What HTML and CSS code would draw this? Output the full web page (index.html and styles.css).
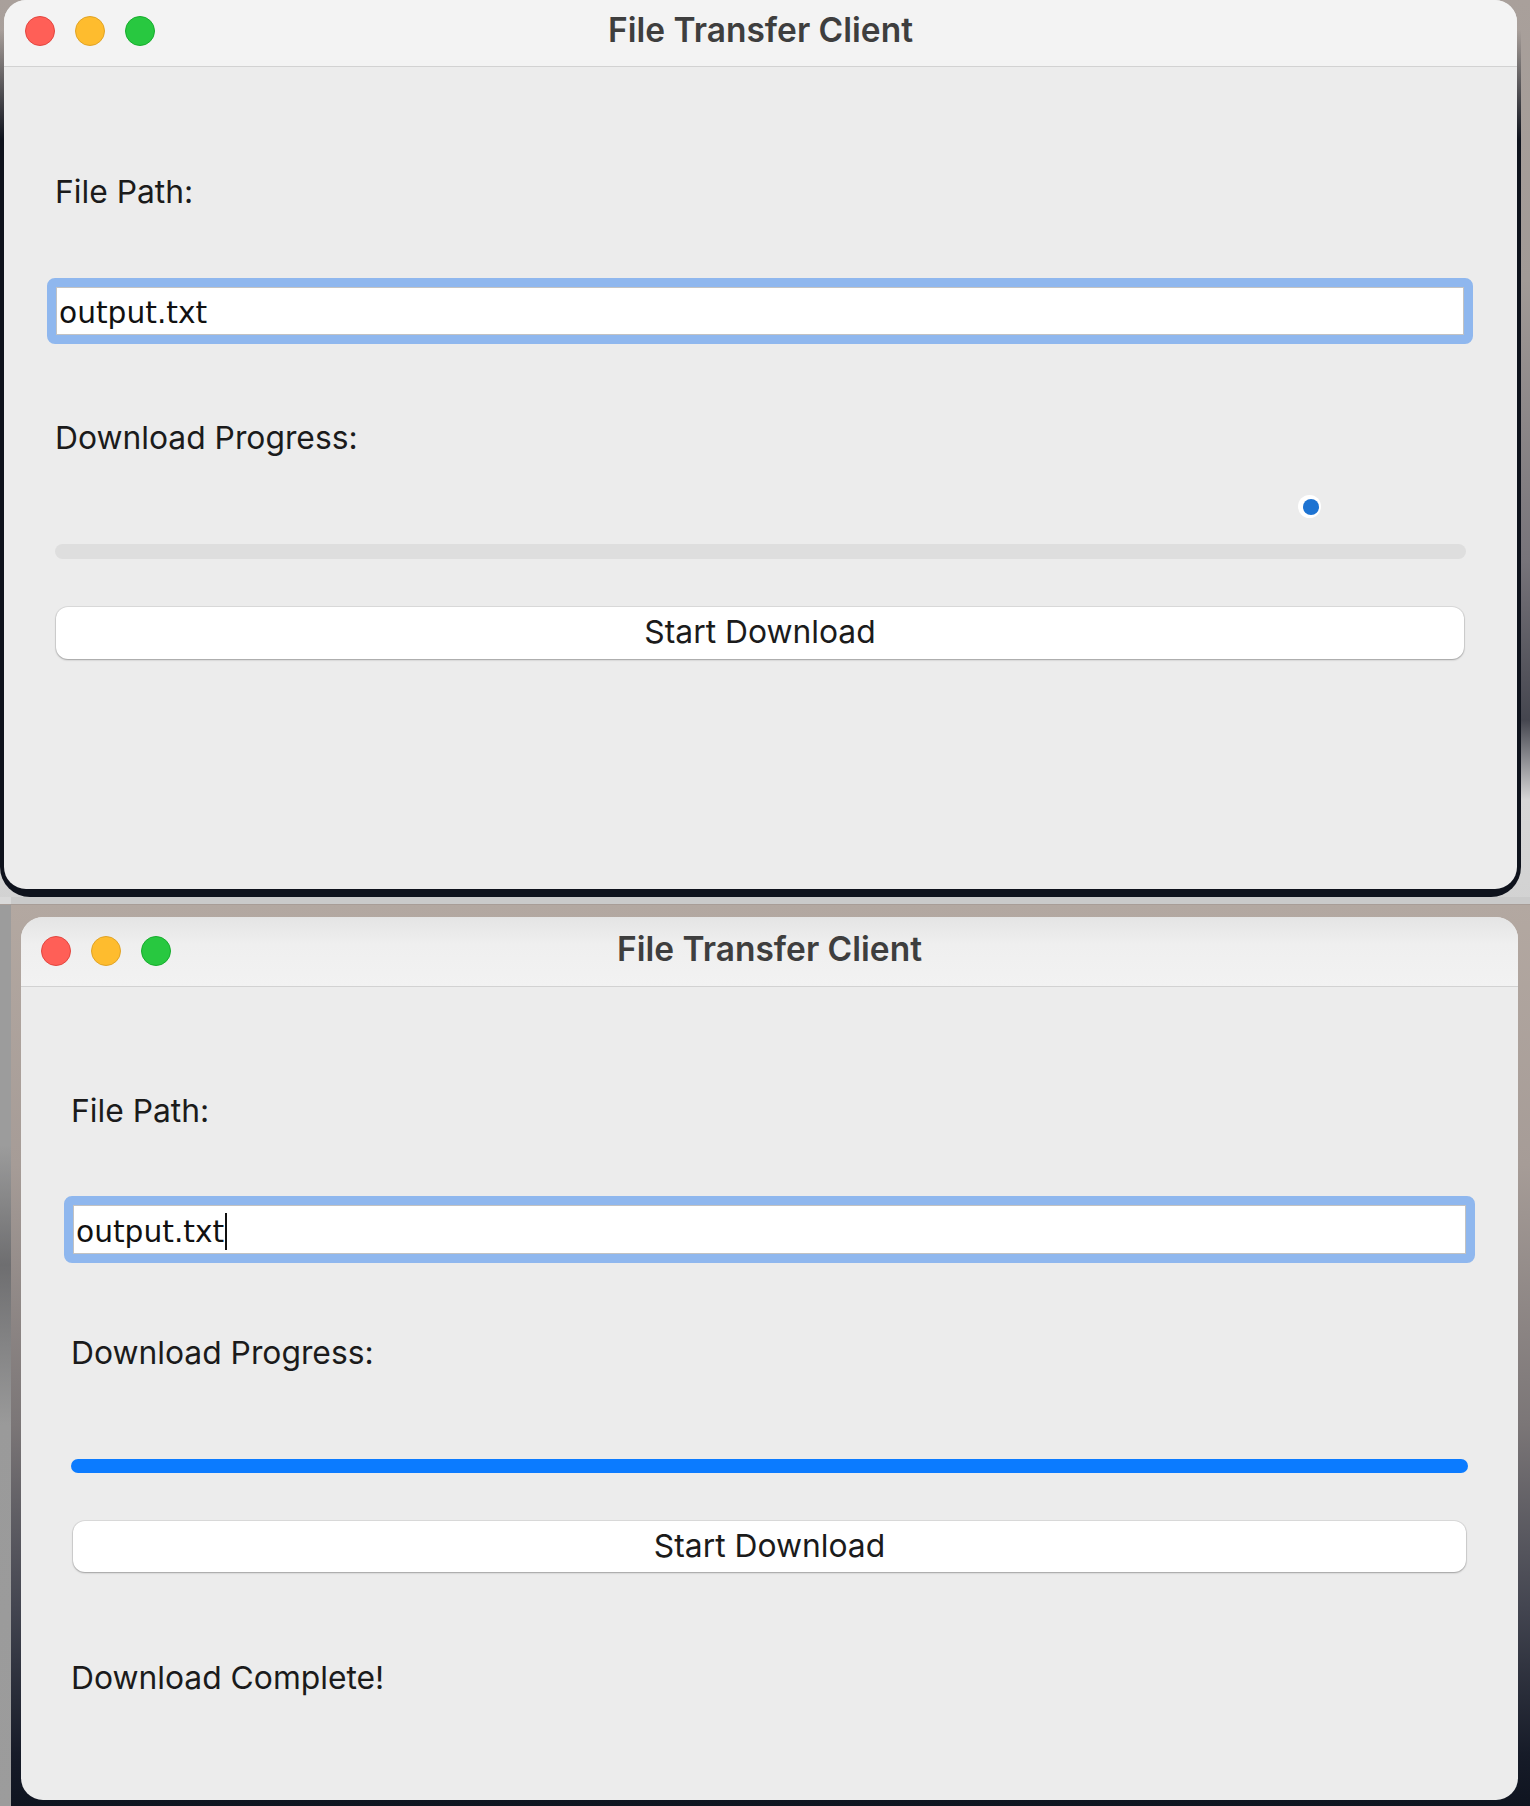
FILE: index.html
```html
<!DOCTYPE html>
<html lang="en">
<head>
<meta charset="utf-8">
<title>File Transfer Client</title>
<link rel="stylesheet" href="styles.css">
</head>
<body>
<div class="screen">
  <section class="shot shot-a">
    <div class="frame frame-a">
      <div class="window win-a">
        <header class="titlebar">
          <div class="lights"><span class="light red"></span><span class="light yellow"></span><span class="light green"></span></div>
          <h1 class="title">File Transfer Client</h1>
        </header>
        <main class="content">
          <div class="label">File Path:</div>
          <div class="entry"><span class="entry-text">output.txt</span></div>
          <div class="label label-progress">Download Progress:</div>
          <div class="meter">
            <div class="track"></div>
            <span class="spinner"><span class="spinner-dot"></span></span>
          </div>
          <button class="btn">Start Download</button>
        </main>
      </div>
    </div>
    <div class="band"></div>
  </section>
  <section class="shot shot-b">
    <div class="window win-b">
      <header class="titlebar">
        <div class="lights"><span class="light red"></span><span class="light yellow"></span><span class="light green"></span></div>
        <h1 class="title">File Transfer Client</h1>
      </header>
      <main class="content">
        <div class="label">File Path:</div>
        <div class="entry"><span class="entry-text">output.txt</span><span class="caret"></span></div>
        <div class="label label-progress">Download Progress:</div>
        <div class="meter">
          <div class="track track-full"></div>
        </div>
        <button class="btn">Start Download</button>
        <div class="label status">Download Complete!</div>
      </main>
    </div>
  </section>
</div>
</body>
</html>
```
FILE: styles.css
```css
* { box-sizing: border-box; }
html, body { margin: 0; padding: 0; }
body {
  width: 1530px;
  height: 1806px;
  overflow: hidden;
  background: #9c9c9c;
  font-family: Inter, "Noto Sans", sans-serif;
}
.screen {
  display: flex;
  flex-direction: column;
  width: 1530px;
  height: 1806px;
}

/* desktop backgrounds */
.shot-a {
  height: 905px;
  display: flex;
  flex-direction: column;
  background: linear-gradient(to bottom, #a9a09b 0, #a19a96 280px, #77747a 560px, #45464f 720px, #d6d6d6 800px, #d2d2d2 905px);
}
.frame-a {
  width: 1521px;
  height: 897px;
  padding: 0 4px 8px 4px;
  background: linear-gradient(to bottom, rgba(14,18,28,0) 0, rgba(14,18,28,0) 30px, #0e121c 140px);
  border-radius: 0 0 30px 30px;
}
.band {
  flex: 1;
  background: linear-gradient(to right, #d9d9d9 0 11px, #cacaca 11px);
  border-bottom: 1px solid #a89d97;
}
.shot-b {
  flex: 1;
  padding: 12px 12px 6px 21px;
  background:
    linear-gradient(to bottom, #9c9c9c 0, #9c9c9c 240px, #6e6e70 360px, #9a9a9a 520px, #9c9c9c 100%) left top / 11px 100% no-repeat,
    linear-gradient(to bottom, #b3a8a1 0, #a69c97 260px, #7b7677 520px, #444651 700px, #161b28 850px, #0f1420 901px);
}

/* window */
.window {
  display: flex;
  flex-direction: column;
  background: #ececec;
  overflow: hidden;
  border-radius: 22px;
}
.win-a { width: 1513px; height: 889px; }
.win-b { width: 1497px; height: 883px; }

.titlebar {
  display: grid;
  grid-template-columns: 1fr auto 1fr;
  align-items: start;
  background: #f3f3f3;
  border-bottom: 1px solid #d2d2d2;
}
.win-a .titlebar { height: 67px; padding: 0 21px; }
.win-b .titlebar {
  height: 70px;
  padding: 0 20px;
  background: linear-gradient(to bottom, #e4e4e4 0, #efefef 40%, #f2f2f2 100%);
}
.lights { display: flex; gap: 20px; }
.win-a .lights { margin-top: 16px; }
.win-b .lights { margin-top: 19px; }
.light {
  width: 30px;
  height: 30px;
  border-radius: 50%;
}
.red { background: #ff5f57; border: 1px solid #e2463f; }
.yellow { background: #febc2e; border: 1px solid #e0a326; }
.green { background: #28c840; border: 1px solid #17ad2d; }
.title {
  margin: 0;
  font-size: 33.5px;
  line-height: 36px;
  font-weight: 600;
  color: #3e3e3e;
  white-space: nowrap;
}
.win-a .title { margin-top: 12px; }
.win-b .title { margin-top: 14px; }

/* content */
.content {
  display: flex;
  flex-direction: column;
  padding: 105px 51px 0;
}
.win-b .content { padding: 104px 50px 0; }
.label {
  height: 40px;
  font-size: 31.8px;
  line-height: 40px;
  color: #1b1b1b;
  white-space: nowrap;
}
.entry {
  display: flex;
  align-items: center;
  margin: 66px -7px 0 -8px;
  height: 66px;
  padding: 3px 0 0 3px;
  border: 9px solid #8fb7ee;
  border-radius: 8px;
  background: #fff;
  box-shadow: inset 0 0 0 1px #c2c2c2;
}
.win-b .entry { margin: 65px -7px 0 -7px; height: 67px; }
.entry-text {
  font-family: "DejaVu Sans", sans-serif;
  font-size: 29.7px;
  color: #111;
}
.caret {
  width: 2px;
  height: 37px;
  margin-left: 1px;
  background: #111;
}
.label-progress { margin-top: 74px; }
.win-b .label-progress { margin-top: 70px; }

.meter {
  position: relative;
  margin-top: 86px;
  height: 15px;
}
.win-b .meter { margin-top: 86px; height: 14px; }
.track {
  height: 100%;
  border-radius: 8px;
  background: #dedede;
}
.track-full { background: #0b7bff; }
.spinner {
  position: absolute;
  left: 1243px;
  top: -49px;
  width: 23px;
  height: 23px;
  border-radius: 50%;
  background: #fff;
  display: flex;
  align-items: center;
  justify-content: flex-end;
  padding-right: 2px;
}
.spinner-dot {
  width: 16px;
  height: 16px;
  border-radius: 50%;
  background: #1d73d2;
}

.btn {
  margin: 48px 2px 0 1px;
  height: 52px;
  border: none;
  border-radius: 12px;
  background: #fff;
  box-shadow: 0 0 0 1px rgba(0,0,0,0.07), 0 1px 2px rgba(0,0,0,0.28);
  font-family: Inter, "Noto Sans", sans-serif;
  font-size: 31.8px;
  line-height: 40px;
  color: #1b1b1b;
  padding: 0 0 3px;
}
.win-b .btn { margin: 48px 2px 0 2px; height: 51px; padding: 0 0 1px; }
.status { margin-top: 86px; }
```
